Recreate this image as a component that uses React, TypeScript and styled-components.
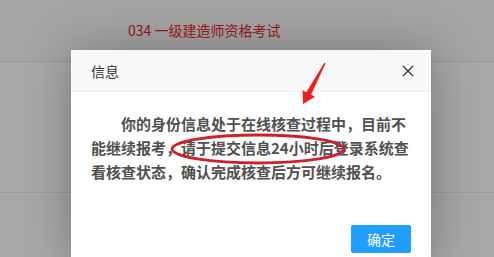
import styled, { createGlobalStyle } from 'styled-components';

const GlobalStyle = createGlobalStyle`
  html, body {
    margin: 0;
    padding: 0;
    background: #ffffff;
    font-family: 'Noto Sans CJK SC', 'Noto Sans', sans-serif;
  }
`;

const Page = styled.div`
  position: relative;
  width: 494px;
  height: 257px;
  overflow: hidden;
  background: #ffffff;
`;

const TopBand = styled.div`
  height: 62px;
  box-sizing: border-box;
  padding: 20px 0 0 128px;
  background: #fafafa;
  border-bottom: 1px solid #e4e4e4;
`;

const ExamName = styled.h2`
  margin: 0;
  font-size: 14px;
  font-weight: 400;
  line-height: 20px;
  color: #ee2424;
`;

const Row = styled.div`
  height: 130px;
  border-bottom: 1px solid #e8e8e8;
`;

// dialog overlay
const Shade = styled.div`
  position: absolute;
  inset: 0;
  background: rgba(0, 0, 0, 0.34);
`;

const Layer = styled.div`
  position: absolute;
  left: 71px;
  top: 50px;
  width: 360px;
  display: flex;
  flex-direction: column;
  background: #ffffff;
  box-shadow: 1px 1px 50px rgba(0, 0, 0, 0.3);
  border-radius: 2px;
`;

const LayerTitle = styled.div`
  display: flex;
  align-items: center;
  justify-content: space-between;
  height: 41px;
  padding: 0 15px 0 20px;
  background: #f8f8f8;
  border-bottom: 1px solid #eeeeee;
  font-size: 14px;
  color: #333333;
`;

const CloseButton = styled.button`
  width: 16px;
  height: 16px;
  padding: 0;
  border: 0;
  background: none;
  display: flex;
  align-items: center;
  justify-content: center;
`;

const LayerContent = styled.div`
  padding: 20px 20px 36px;
  font-size: 15px;
  font-weight: 700;
  line-height: 24px;
  color: #505050;
  text-indent: 2em;
  word-break: break-all;
`;

const BtnBar = styled.div`
  display: flex;
  justify-content: flex-end;
  padding: 0 15px 12px;
`;

const ConfirmButton = styled.button`
  height: 28px;
  margin: 5px 5px 0;
  padding: 0 15px;
  border: 1px solid #1e9fff;
  border-radius: 2px;
  background: #1e9fff;
  color: #ffffff;
  font-family: 'Noto Sans CJK SC', sans-serif;
  font-size: 14px;
  line-height: 26px;
`;

// hand-drawn annotations over the dialog
const Mark = styled.svg`
  position: absolute;
  pointer-events: none;
`;

export default function App() {
  return (
    <>
      <GlobalStyle />
      <Page>
        <TopBand>
          <ExamName>034 一级建造师资格考试</ExamName>
        </TopBand>
        <Row />
        <Shade />
        <Layer>
          <LayerTitle>
            信息
            <CloseButton aria-label="关闭">
              <svg width="12" height="12" viewBox="0 0 12 12">
                <path d="M1 1 L11 11 M11 1 L1 11" stroke="#333" strokeWidth="1.4" fill="none" />
              </svg>
            </CloseButton>
          </LayerTitle>
          <LayerContent>
            你的身份信息处于在线核查过程中，目前不能继续报考，请于提交信息24小时后登录系统查看核查状态，确认完成核查后方可继续报名。
          </LayerContent>
          <BtnBar>
            <ConfirmButton>确定</ConfirmButton>
          </BtnBar>
        </Layer>
        <Mark style={{ left: 168, top: 131 }} width="182" height="36" viewBox="0 0 182 36">
          <ellipse cx="90" cy="18" rx="86" ry="14" fill="none" stroke="#cf1f29" strokeWidth="2.8" />
        </Mark>
        <Mark style={{ left: 280, top: 55 }} width="60" height="60" viewBox="0 0 60 60">
          <polygon
            points="23,49 35,41.8 31.2,39.6 45.6,8.3 44.4,7.7 26.3,37.2 22.6,35.2"
            fill="#f01c1c"
          />
        </Mark>
      </Page>
    </>
  );
}
